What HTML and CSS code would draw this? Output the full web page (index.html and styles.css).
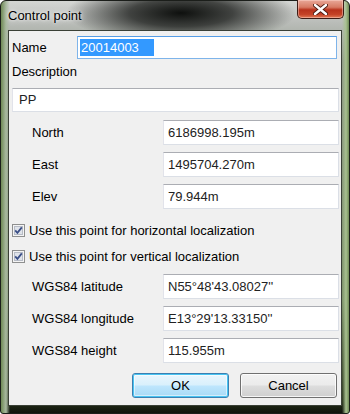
FILE: index.html
```html
<!DOCTYPE html>
<html lang="en">

<head>
  <meta charset="UTF-8" />
  <meta name="viewport" content="width=device-width, initial-scale=1.0" />
  <title>Control point</title>
  <link rel="stylesheet" href="styles.css">
</head>

<body>
  <div class="window">
    <div class="title-bar">
      <span class="title">Control point</span>
      <button class="close-btn" type="button">
        <svg width="15" height="11" viewBox="0 0 15 11">
          <path d="M2 1 L13 10 M13 1 L2 10" stroke="#4a1a10" stroke-width="4.2" stroke-linecap="round" />
          <path d="M2 1 L13 10 M13 1 L2 10" stroke="#fff" stroke-width="2.4" stroke-linecap="round" />
        </svg>
      </button>
    </div>

    <div class="client">
      <div class="name-row">
        <label class="name-label">Name</label>
        <div class="input name-input focused"><span class="selected">20014003</span></div>
      </div>
      <div class="desc-label">Description</div>
      <div class="input desc-input">PP</div>

      <!-- local coordinates -->
      <div class="fields fields-top">
        <label>North</label>
        <div class="input">6186998.195m</div>
        <label>East</label>
        <div class="input">1495704.270m</div>
        <label>Elev</label>
        <div class="input">79.944m</div>
      </div>

      <div class="checks">
        <div class="check-row">
          <span class="checkbox">
            <svg width="13" height="13" viewBox="0 0 13 13">
              <rect x="0.5" y="0.5" width="12" height="12" fill="#f4f4f4" stroke="#8e8f8f" />
              <rect x="2.5" y="2.5" width="8" height="8" fill="#dfe3ea" stroke="#b7bcc6" />
              <path d="M3.2 6.4 L5.4 8.8 L9.8 3.4" fill="none" stroke="#3b4f87" stroke-width="1.8" />
            </svg>
          </span>
          <span>Use this point for horizontal localization</span>
        </div>
        <div class="check-row">
          <span class="checkbox">
            <svg width="13" height="13" viewBox="0 0 13 13">
              <rect x="0.5" y="0.5" width="12" height="12" fill="#f4f4f4" stroke="#8e8f8f" />
              <rect x="2.5" y="2.5" width="8" height="8" fill="#dfe3ea" stroke="#b7bcc6" />
              <path d="M3.2 6.4 L5.4 8.8 L9.8 3.4" fill="none" stroke="#3b4f87" stroke-width="1.8" />
            </svg>
          </span>
          <span>Use this point for vertical localization</span>
        </div>
      </div>

      <!-- WGS84 -->
      <div class="fields fields-wgs">
        <label>WGS84 latitude</label>
        <div class="input">N55°48'43.08027''</div>
        <label>WGS84 longitude</label>
        <div class="input">E13°29'13.33150''</div>
        <label>WGS84 height</label>
        <div class="input">115.955m</div>
      </div>

      <div class="buttons">
        <button class="btn btn-default" type="button">OK</button>
        <button class="btn" type="button">Cancel</button>
      </div>
    </div>
  </div>
</body>

</html>
```

FILE: styles.css
```css
* {
  margin: 0;
  padding: 0;
  box-sizing: border-box;
}

body {
  width: 350px;
  height: 414px;
  overflow: hidden;
  background: #fff;
  font-family: "Liberation Sans", Arial, sans-serif;
  font-size: 13px;
  color: #000;
}

.window {
  width: 350px;
  height: 414px;
  padding: 0 7px 0 7px;
  border: 1px solid #1b1e1a;
  border-radius: 6px 6px 3px 3px;
  background:
    radial-gradient(ellipse 115px 30px at 180px 12px, rgba(8, 10, 8, 0.97), rgba(20, 22, 20, 0.75) 45%, rgba(60, 62, 60, 0) 100%),
    linear-gradient(to right, #6f8a55 0, #a9b9a0 5px, rgba(200, 204, 200, 0) 9px, rgba(200, 204, 200, 0) 341px, #a8c090 345px, #5f7a45 349px),
    linear-gradient(to bottom, #d4d6d3 0, #b9bcb8 22px, #8f9a88 60px, #7a8f68 300px, #253018 400px, #0b0d0a 414px);
  display: flex;
  flex-direction: column;
}

.title-bar {
  height: 29px;
  display: flex;
  justify-content: space-between;
  align-items: flex-start;
}

.title {
  padding-top: 7px;
  font-family: "Liberation Sans", Arial, sans-serif;
  font-size: 13px;
  color: #000;
  text-shadow: 0 0 6px rgba(255, 255, 255, 0.9), 0 0 3px rgba(255, 255, 255, 0.8);
}

.close-btn {
  width: 47px;
  height: 19px;
  margin-top: -1px;
  margin-right: -2px;
  border: 1px solid #3d1d16;
  border-top: none;
  border-radius: 0 0 5px 5px;
  background: linear-gradient(to bottom, #e9a899 0, #d77a64 40%, #b8321c 55%, #c44226 80%, #e07a55 100%);
  box-shadow: inset 0 0 0 1px rgba(255, 220, 210, 0.45);
  display: flex;
  align-items: center;
  justify-content: center;
}

.client {
  flex: 1;
  margin-bottom: 7px;
  background: #f0f0f0;
  border: 1px solid #3a4036;
  padding: 5px 2px 0 3px;
  display: flex;
  flex-direction: column;
}

.input {
  height: 25px;
  padding: 0 4px;
  line-height: 23px;
  background: #fff;
  border: 1px solid #dbdfe6;
  border-top-color: #abadb3;
  border-left-color: #e2e3ea;
  color: #222;
  white-space: nowrap;
  overflow: hidden;
}

.name-row {
  display: flex;
  align-items: center;
}

.name-label {
  width: 65px;
}

.name-input {
  width: 260px;
  height: 23px;
  line-height: 21px;
  padding-left: 2px;
}

.focused {
  border-color: #7eb4ea;
  border-top-color: #569de5;
}

.selected {
  display: inline-block;
  height: 17px;
  line-height: 17px;
  padding: 0 1px;
  width: 74px;
  background: #3399ff;
  color: #fff;
}

.desc-label {
  margin-top: 5px;
  height: 16px;
  line-height: 16px;
}

.desc-input {
  margin-top: 8px;
  width: 327px;
  height: 24px;
  line-height: 22px;
  padding-left: 6px;
}

.fields {
  display: grid;
  grid-template-columns: 131px 176px;
  row-gap: 7px;
  padding-left: 20px;
  align-items: center;
}

.fields-top {
  margin-top: 8px;
}

.fields-wgs {
  margin-top: 8px;
}

.checks {
  margin-top: 11px;
  display: flex;
  flex-direction: column;
  gap: 6px;
}

.check-row {
  height: 20px;
  display: flex;
  align-items: center;
  gap: 4px;
}

.checkbox {
  display: flex;
  width: 13px;
  height: 13px;
}

.buttons {
  margin-top: 10px;
  display: flex;
  justify-content: flex-end;
  gap: 11px;
  padding-right: 2px;
}

.btn {
  width: 97px;
  height: 25px;
  font-family: "Liberation Sans", Arial, sans-serif;
  font-size: 13px;
  color: #000;
  border: 1px solid #707070;
  border-radius: 3px;
  background: linear-gradient(to bottom, #f2f2f2 0, #ebebeb 48%, #dddddd 52%, #cfcfcf 100%);
  box-shadow: inset 0 0 0 1px rgba(255, 255, 255, 0.8);
}

.btn-default {
  border-color: #3c7fb1;
  background: linear-gradient(to bottom, #eaf6fd 0, #d9f0fc 48%, #bee6fd 52%, #a7d9f5 100%);
  box-shadow: inset 0 0 0 1px #48c4f2, inset 0 0 0 2px rgba(255, 255, 255, 0.5);
}
```
